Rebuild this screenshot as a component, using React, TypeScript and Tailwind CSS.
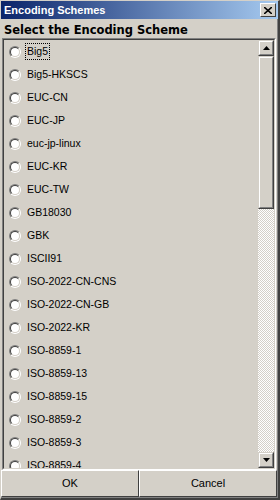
import React from 'react';

const schemes = [
  'Big5',
  'Big5-HKSCS',
  'EUC-CN',
  'EUC-JP',
  'euc-jp-linux',
  'EUC-KR',
  'EUC-TW',
  'GB18030',
  'GBK',
  'ISCII91',
  'ISO-2022-CN-CNS',
  'ISO-2022-CN-GB',
  'ISO-2022-KR',
  'ISO-8859-1',
  'ISO-8859-13',
  'ISO-8859-15',
  'ISO-8859-2',
  'ISO-8859-3',
  'ISO-8859-4',
];

function Radio() {
  return (
    <span className="flex h-[12px] w-[12px] shrink-0 rounded-full border border-t-[#808080] border-l-[#808080] border-r-white border-b-white">
      <span className="h-full w-full rounded-full border border-t-[#404040] border-l-[#404040] border-r-[#d4d0c8] border-b-[#d4d0c8] bg-white" />
    </span>
  );
}

function Arrow({ up }: { up?: boolean }) {
  return (
    <svg width="7" height="4" viewBox="0 0 7 4">
      {up ? <path d="M3.5 0 L7 4 L0 4 Z" fill="#000" /> : <path d="M0 0 L7 0 L3.5 4 Z" fill="#000" />}
    </svg>
  );
}

function ScrollButton({ up }: { up?: boolean }) {
  return (
    <div className="flex h-[16px] w-[16px] shrink-0 items-center justify-center border border-t-[#d4d0c8] border-l-[#d4d0c8] border-r-[#404040] border-b-[#404040] bg-[#d4d0c8]">
      <div className="flex h-full w-full items-center justify-center border border-t-white border-l-white border-r-[#808080] border-b-[#808080]">
        <Arrow up={up} />
      </div>
    </div>
  );
}

export default function App() {
  return (
    <div className="flex h-[500px] w-[280px] flex-col border-l border-t border-r-2 border-b-2 border-l-[#d4d0c8] border-t-[#d4d0c8] border-r-[#404040] border-b-[#404040] bg-[#d4d0c8] font-['Liberation_Sans',Arial,sans-serif]">
      {/* title bar */}
      <div className="flex h-[18px] shrink-0 items-center justify-between bg-[linear-gradient(to_right,#0a246a,#a6caf0)] pl-[3px] pr-[2px]">
        <span className="text-[11px] font-bold text-white">Encoding Schemes</span>
        <div className="flex h-[14px] w-[16px] items-center justify-center border border-t-white border-l-white border-r-[#404040] border-b-[#404040] bg-[#d4d0c8]">
          <svg width="8" height="7" viewBox="0 0 8 7">
            <path d="M0 0 L8 7 M8 0 L0 7" stroke="#000" strokeWidth="1.6" />
          </svg>
        </div>
      </div>

      <div className="flex flex-1 flex-col border-r border-b border-r-[#808080] border-b-[#808080]">
        <div className="h-[19px] shrink-0 pl-[3px] pt-[3px] font-['DejaVu_Sans',sans-serif] text-[11.5px] font-bold leading-[16px] text-black">
          Select the Encoding Scheme
        </div>

        {/* list */}
        <div className="mx-[1px] flex h-[432px] shrink-0 border border-t-[#808080] border-l-[#808080] border-r-white border-b-white">
          <div className="flex flex-1 overflow-hidden border border-t-[#404040] border-l-[#404040] border-r-[#d4d0c8] border-b-[#d4d0c8]">
            <div className="flex-1 overflow-hidden">
              {schemes.map((s, i) => (
                <div key={s} className="flex h-[23px] items-center gap-[5px] pl-[5px]">
                  <Radio />
                  <span
                    className={
                      'px-[1px] text-[10.5px] leading-[15px] text-black ' +
                      (i === 0 ? 'outline outline-1 outline-dotted outline-black' : '')
                    }
                  >
                    {s}
                  </span>
                </div>
              ))}
            </div>
            <div className="flex w-[16px] flex-col">
              <ScrollButton up />
              <div className="h-[153px] shrink-0 border border-t-[#d4d0c8] border-l-[#d4d0c8] border-r-[#404040] border-b-[#404040]">
                <div className="h-full border border-t-white border-l-white border-r-[#808080] border-b-[#808080]" />
              </div>
              <div className="flex-1 bg-[repeating-conic-gradient(#d4d0c8_0%_25%,#ffffff_0%_50%)] bg-[length:2px_2px]" />
              <ScrollButton />
            </div>
          </div>
        </div>

        {/* buttons */}
        <div className="flex flex-1">
          <button className="flex-1 border border-t-white border-l-white border-r-[#404040] border-b-[#404040] text-[11px] text-black">
            OK
          </button>
          <button className="flex-1 border border-t-white border-l-white border-r-[#404040] border-b-[#404040] text-[11px] text-black">
            Cancel
          </button>
        </div>
      </div>
    </div>
  );
}
